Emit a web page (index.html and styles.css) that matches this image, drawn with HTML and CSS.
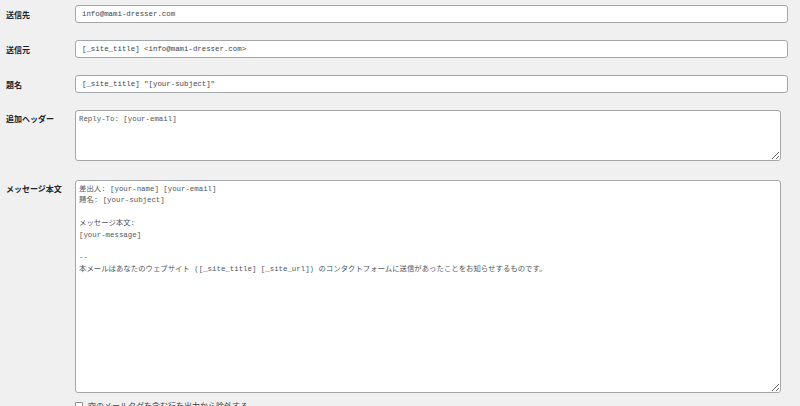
FILE: index.html
```html
<!DOCTYPE html>
<html lang="ja">
<head>
<meta charset="utf-8">
<title>メール設定</title>
<link rel="stylesheet" href="styles.css">
</head>
<body>
<div class="form">
  <div class="row">
    <label class="label" for="to">送信先</label>
    <input class="field" id="to" type="text" value="info@mami-dresser.com">
  </div>
  <div class="row">
    <label class="label" for="from">送信元</label>
    <input class="field" id="from" type="text" value="[_site_title] <info@mami-dresser.com>">
  </div>
  <div class="row">
    <label class="label" for="subject">題名</label>
    <input class="field" id="subject" type="text" value="[_site_title] &quot;[your-subject]&quot;">
  </div>
  <div class="row row-area">
    <label class="label label-area" for="headers">追加ヘッダー</label>
    <textarea class="area area-small" id="headers">Reply-To: [your-email]</textarea>
  </div>
  <div class="row row-body">
    <label class="label label-area" for="body">メッセージ本文</label>
    <div class="body-col">
      <textarea class="area area-large" id="body">差出人: [your-name] [your-email]
題名: [your-subject]

メッセージ本文:
[your-message]

-- 
本メールはあなたのウェブサイト ([_site_title] [_site_url]) のコンタクトフォームに送信があったことをお知らせするものです。</textarea>
      <label class="check">
        <input class="checkbox" type="checkbox">
        <span>空のメールタグを含む行を出力から除外する</span>
      </label>
    </div>
  </div>
</div>
</body>
</html>
```

FILE: styles.css
```css
html, body {
  margin: 0;
  padding: 0;
  background: #f0f0f1;
  height: 100%;
  overflow: hidden;
}

body {
  font-family: "Noto Sans CJK JP", "Noto Sans", sans-serif;
  color: #1d2327;
}

.form {
  display: flex;
  flex-direction: column;
  padding: 5px 12px 0 6px;
}

.row {
  display: grid;
  grid-template-columns: 69px 1fr;
  align-items: start;
  margin-bottom: 17px;
}

.row-area {
  margin-bottom: 19px;
}

.label {
  font-size: 8px;
  font-weight: 700;
  line-height: 12px;
  padding-top: 4px;
  color: #1d2327;
}

.label-area {
  padding-top: 3px;
}

.field {
  display: block;
  box-sizing: border-box;
  margin: 0;
  width: 100%;
  height: 18px;
  padding: 0 6px;
  border: 1px solid #a4a7aa;
  border-radius: 3px;
  background: #fff;
  font-family: "Liberation Mono", "Noto Sans CJK JP", monospace;
  font-size: 7.4px;
  color: #3c434a;
  outline: none;
}

.area {
  display: block;
  box-sizing: border-box;
  margin: 0;
  width: calc(100% - 7px);
  padding: 3px 3px;
  border: 1px solid #a4a7aa;
  border-radius: 3px;
  background: #fff;
  font-family: "Liberation Mono", "Noto Sans CJK JP", monospace;
  font-size: 7.4px;
  line-height: 11.4px;
  color: #50575e;
  resize: vertical;
  outline: none;
  overflow: hidden;
}

.area-small {
  height: 51px;
}

.area-large {
  height: 213px;
}

.body-col {
  display: flex;
  flex-direction: column;
}

.check {
  display: flex;
  align-items: center;
  gap: 5px;
  margin-top: 8px;
  font-size: 8px;
  line-height: 10px;
  color: #3c434a;
}

.checkbox {
  appearance: none;
  -webkit-appearance: none;
  margin: 0;
  width: 8px;
  height: 8px;
  border: 1px solid #8c8f94;
  border-radius: 1px;
  background: #fff;
  box-sizing: border-box;
}
```
